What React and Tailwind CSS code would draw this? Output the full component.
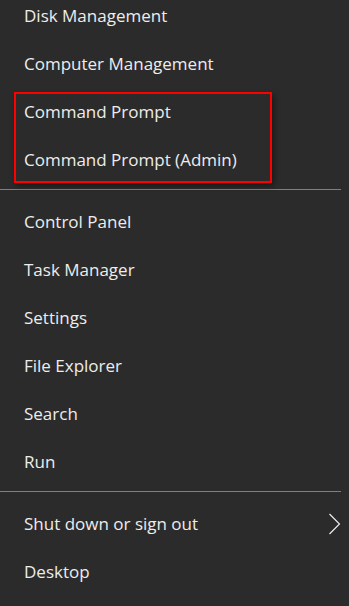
const topItems = ['Disk Management', 'Computer Management'];
const boxedItems = ['Command Prompt', 'Command Prompt (Admin)'];
const middleItems = ['Control Panel', 'Task Manager', 'Settings', 'File Explorer', 'Search', 'Run'];

function MenuRow({ label, children }) {
    return (
        <div className="flex h-12 items-center justify-between pl-6 pr-[8px] text-[17px] text-[#ededed]">
            <span>{label}</span>
            {children}
        </div>
    );
}

function Divider() {
    return <div className="mb-2 mt-[5px] h-px w-[341px] bg-[#7f7f7f]" />;
}

export default function App() {
    return (
        <div
            className="h-[606px] w-[349px] overflow-hidden bg-[#2b2b2b]"
            style={{ fontFamily: '"Open Sans", "Noto Sans", sans-serif' }}
        >
            <div className="-mt-2">
                {topItems.map((item) => (
                    <MenuRow key={item} label={item} />
                ))}
                <div className="relative">
                    {boxedItems.map((item) => (
                        <MenuRow key={item} label={item} />
                    ))}
                    <div className="absolute left-[14px] top-1 h-[91px] w-[258px] border-2 border-[#ff0000] shadow-[2px_3px_6px_rgba(0,0,0,0.45)]" />
                </div>
                <Divider />
                {middleItems.map((item) => (
                    <MenuRow key={item} label={item} />
                ))}
                <Divider />
                <MenuRow label="Shut down or sign out">
                    <svg width="13" height="22" viewBox="0 0 13 22" fill="none">
                        <polyline points="1.5,1 11.5,11 1.5,21" stroke="#f2f2f2" strokeWidth="1.1" />
                    </svg>
                </MenuRow>
                <MenuRow label="Desktop" />
            </div>
        </div>
    );
}
